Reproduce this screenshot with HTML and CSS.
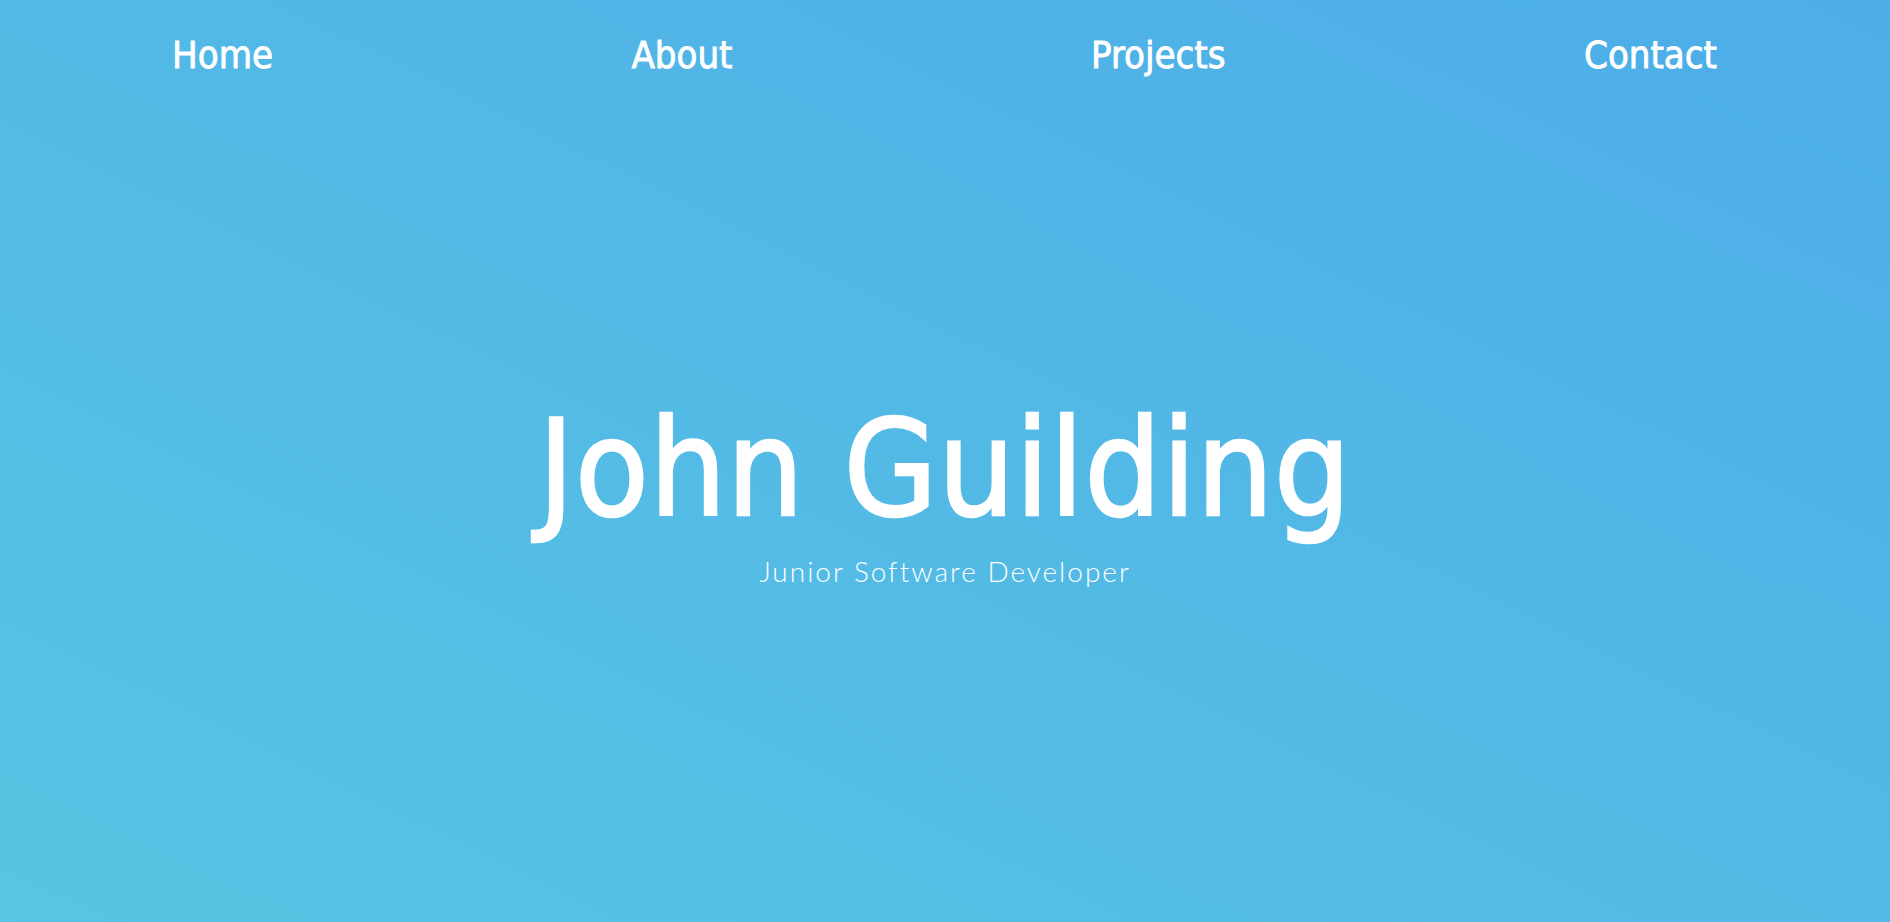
FILE: index.html
```html
<!DOCTYPE html>
<html lang="en">
<head>
<meta charset="utf-8">
<title>John Guilding</title>
<link rel="stylesheet" href="styles.css">
</head>
<body>
<div class="page">
  <nav class="nav">
    <a class="nav-link" href="#">Home</a>
    <a class="nav-link" href="#">About</a>
    <a class="nav-link" href="#">Projects</a>
    <a class="nav-link" href="#">Contact</a>
  </nav>
  <header class="hero">
    <h1 class="hero-title">John Guilding</h1>
    <p class="hero-subtitle">Junior Software Developer</p>
  </header>
</div>
</body>
</html>
```

FILE: styles.css
```css
html, body {
  margin: 0;
  padding: 0;
}

body {
  width: 1890px;
  height: 922px;
  overflow: hidden;
}

.page {
  height: 922px;
  background: linear-gradient(to top right, #58c5e3, #4dade8);
  color: #ffffff;
  display: flex;
  flex-direction: column;
}

.nav {
  display: flex;
  justify-content: space-between;
  padding: 32px 173px 0 172px;
}

.nav-link {
  font-family: "DejaVu Sans Condensed", "DejaVu Sans", sans-serif;
  font-size: 38px;
  line-height: 46px;
  color: #ffffff;
  text-decoration: none;
  -webkit-text-stroke: 0.8px #ffffff;
}

.hero {
  display: flex;
  flex-direction: column;
  align-items: center;
  padding-top: 324px;
}

.hero-title {
  margin: 0;
  font-family: "DejaVu Sans Condensed", "DejaVu Sans", sans-serif;
  font-weight: normal;
  font-size: 134px;
  line-height: 134px;
  letter-spacing: 1px;
  -webkit-text-stroke: 2.5px #ffffff;
}

.hero-subtitle {
  margin: 21px 0 0;
  font-family: Lato, "Open Sans", sans-serif;
  font-weight: 300;
  font-size: 28px;
  line-height: 28px;
  letter-spacing: 2px;
}
```
